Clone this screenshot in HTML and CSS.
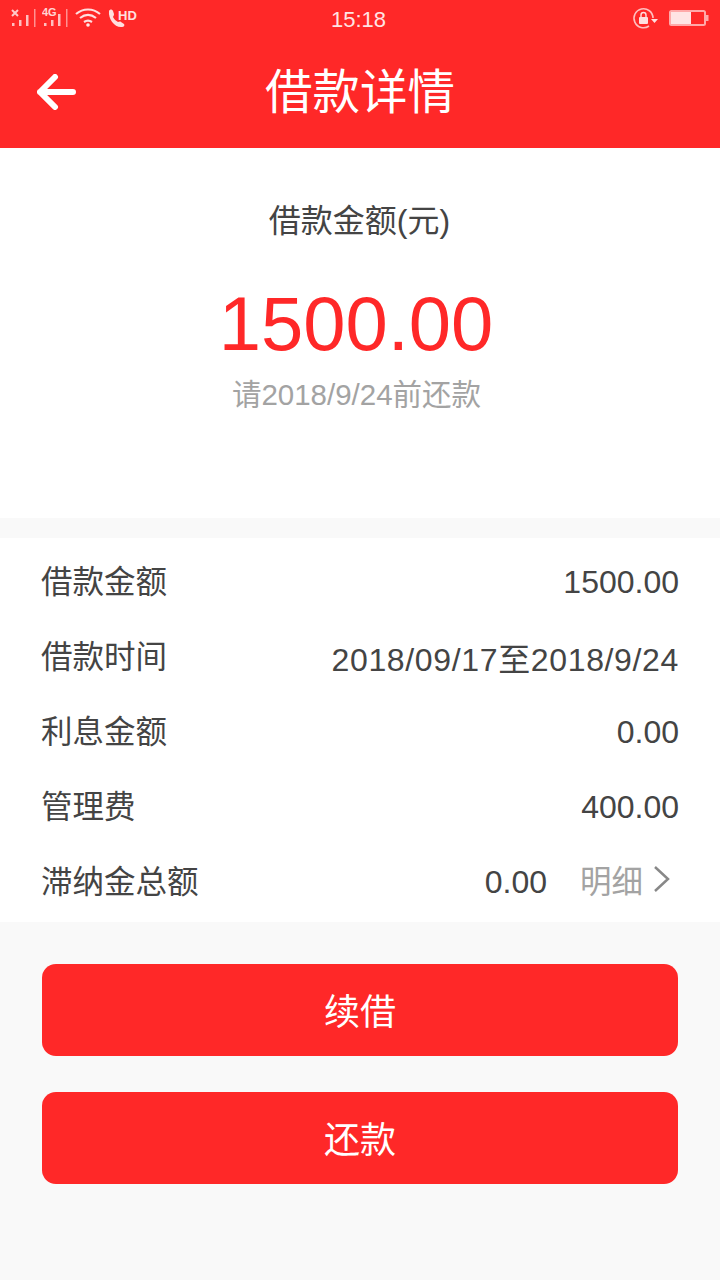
FILE: index.html
```html
<!DOCTYPE html>
<html>
<head lang="zh">
    <meta charset="UTF-8">
    <title>借款详情</title>
    <link rel="stylesheet" href="styles.css">
</head>
<body>

<div class="header">
    <div class="status-bar">
        <svg width="140" height="38" viewBox="0 0 140 38">
            <path d="M12 10l6 6M18 10l-6 6" stroke="#fff" stroke-width="2" opacity=".75"/>
            <g fill="#fff" opacity=".7">
                <rect x="12" y="23" width="2.500" height="3"/><rect x="19" y="20" width="2.500" height="6"/>
                <rect x="26" y="15" width="2.500" height="11"/>
                <rect x="34" y="9" width="1.500" height="18" opacity=".7"/>
                <rect x="44" y="23" width="2.500" height="3"/><rect x="51" y="20" width="2.500" height="6"/>
                <rect x="58" y="14" width="2.500" height="12"/>
                <rect x="66" y="9" width="1.500" height="18" opacity=".7"/>
            </g>
            <text x="42" y="16" class="sig-text">4G</text>
            <g fill="none" stroke="#fff" stroke-width="2.200" opacity=".85">
                <path d="M76 14c7-6 17-6 24 0"/><path d="M80 18c5-4 11-4 16 0"/><path d="M84 22c3-2 5-2 8 0"/>
            </g>
            <circle cx="88" cy="25" r="1.800" fill="#fff" opacity=".9"/>
            <path d="M109 11c1-2 3-2 4 0l1 3c0 2-1 2-1 3 1 2 3 4 5 5 1 0 2-1 3 0l3 2c1 1 0 3-2 3-7 1-14-8-13-16z" fill="#fff" opacity=".85"/>
            <text x="118" y="20" class="hd-text">HD</text>
        </svg>
        <div class="status-time">15:18</div>
        <svg width="90" height="38" viewBox="630 0 90 38">
            <path d="M653 18a9.500 9.500 0 1 0-4 8" fill="none" stroke="#fff" stroke-width="1.600" opacity=".7"/>
            <path d="M651 19h7l-3.500 4z" fill="#fff" opacity=".85"/>
            <rect x="639" y="17" width="9" height="7" rx="1" fill="#fff" opacity=".85"/>
            <path d="M641 17v-2a2.500 2.500 0 0 1 5 0v2" fill="none" stroke="#fff" stroke-width="1.400" opacity=".85"/>
            <rect x="670" y="11" width="35" height="14" rx="1.500" fill="none" stroke="#ffa9a9" stroke-width="2"/>
            <rect x="671" y="12" width="20" height="12" fill="#ffe4e4"/>
            <rect x="706" y="15" width="2.500" height="6" fill="#ffa9a9"/>
        </svg>
    </div>
    <div class="title-bar">
        <svg class="back" width="40" height="36" viewBox="0 0 40 36">
            <path d="M18 3L3 18l15 15M3 18h33" fill="none" stroke="#fff" stroke-width="6" stroke-linecap="round" stroke-linejoin="round"/>
        </svg>
        <h1 class="title">借款详情</h1>
    </div>
</div>

<div class="summary">
    <div class="summary-label">借款金额(元)</div>
    <div class="summary-amount">1500.00</div>
    <div class="summary-date">请2018/9/24前还款</div>
</div>

<div class="detail">
    <div class="detail-row"><span>借款金额</span><span class="val">1500.00</span></div>
    <div class="detail-row"><span>借款时间</span><span class="val val-date">2018/09/17至2018/9/24</span></div>
    <div class="detail-row"><span>利息金额</span><span class="val">0.00</span></div>
    <div class="detail-row"><span>管理费</span><span class="val">400.00</span></div>
    <div class="detail-row">
        <span>滞纳金总额</span>
        <span class="late">
            <span class="val">0.00</span>
            <span class="more">明细</span>
            <svg width="18" height="28" viewBox="0 0 18 28"><path d="M2 2l13 12L2 26" fill="none" stroke="#888" stroke-width="2.500"/></svg>
        </span>
    </div>
</div>

<div class="actions">
    <a class="btn" href="javascript:void(0);">续借</a>
    <a class="btn" href="javascript:void(0);">还款</a>
</div>

</body>
</html>
```

FILE: styles.css
```css
html, body, div, span, h1, a {
    padding: 0px;
    margin: 0px;
}

body {
    width: 720px;
    height: 1280px;
    overflow: hidden;
    background: #f9f9f9;
    font-family: "Liberation Sans", "Noto Sans CJK SC", sans-serif;
    color: #444444;
}

a {
    text-decoration: none;
}

.header {
    height: 148px;
    background: #ff2828;
    color: #ffffff;
}

.status-bar {
    height: 38px;
    display: flex;
    align-items: center;
    justify-content: space-between;
    position: relative;
}

.sig-text {
    font-size: 11px;
    font-weight: bold;
    fill: #ffffff;
    opacity: 0.8;
}

.hd-text {
    font-size: 13px;
    font-weight: bold;
    fill: #ffffff;
    opacity: 0.85;
}

.status-time {
    position: absolute;
    left: 0px;
    right: 0px;
    top: 0px;
    text-align: center;
    font-size: 22px;
    line-height: 40px;
    color: #ffe4e4;
    padding-right: 3px;
}

.title-bar {
    height: 110px;
    display: flex;
    align-items: center;
    justify-content: center;
    position: relative;
}

.back {
    position: absolute;
    left: 37px;
    top: 36px;
}

.title {
    font-size: 47.5px;
    font-weight: normal;
    line-height: 110px;
}

.summary {
    height: 370px;
    background: #ffffff;
    text-align: center;
    overflow: hidden;
}

.summary-label {
    margin-top: 53px;
    font-size: 32px;
    line-height: 40px;
    padding-right: 1px;
}

.summary-amount {
    margin-top: 38px;
    font-size: 76px;
    line-height: 90px;
    color: #ff2828;
    padding-right: 8px;
}

.summary-date {
    margin-top: 8px;
    font-size: 29.5px;
    line-height: 36px;
    color: #a3a3a3;
    padding-right: 7px;
}

.detail {
    margin-top: 20px;
    height: 384px;
    padding: 3px 41px 0px 41px;
    box-sizing: border-box;
    background: #ffffff;
}

.detail-row {
    height: 75px;
    display: flex;
    align-items: center;
    justify-content: space-between;
    font-size: 31.5px;
}

.val {
    font-size: 32px;
    color: #444444;
    margin-top: 7px;
}

.val-date {
    letter-spacing: 0.65px;
}

.late {
    display: flex;
    align-items: center;
}

.more {
    margin-left: 33px;
    color: #a3a3a3;
}

.late svg {
    margin-left: 10px;
    margin-right: 8px;
}

.actions {
    padding: 42px 42px 0px 42px;
    display: flex;
    flex-direction: column;
    gap: 36px;
}

.btn {
    display: block;
    height: 92px;
    line-height: 97px;
    border-radius: 14px;
    background: #ff2828;
    color: #ffffff;
    font-size: 36px;
    text-align: center;
}
```
